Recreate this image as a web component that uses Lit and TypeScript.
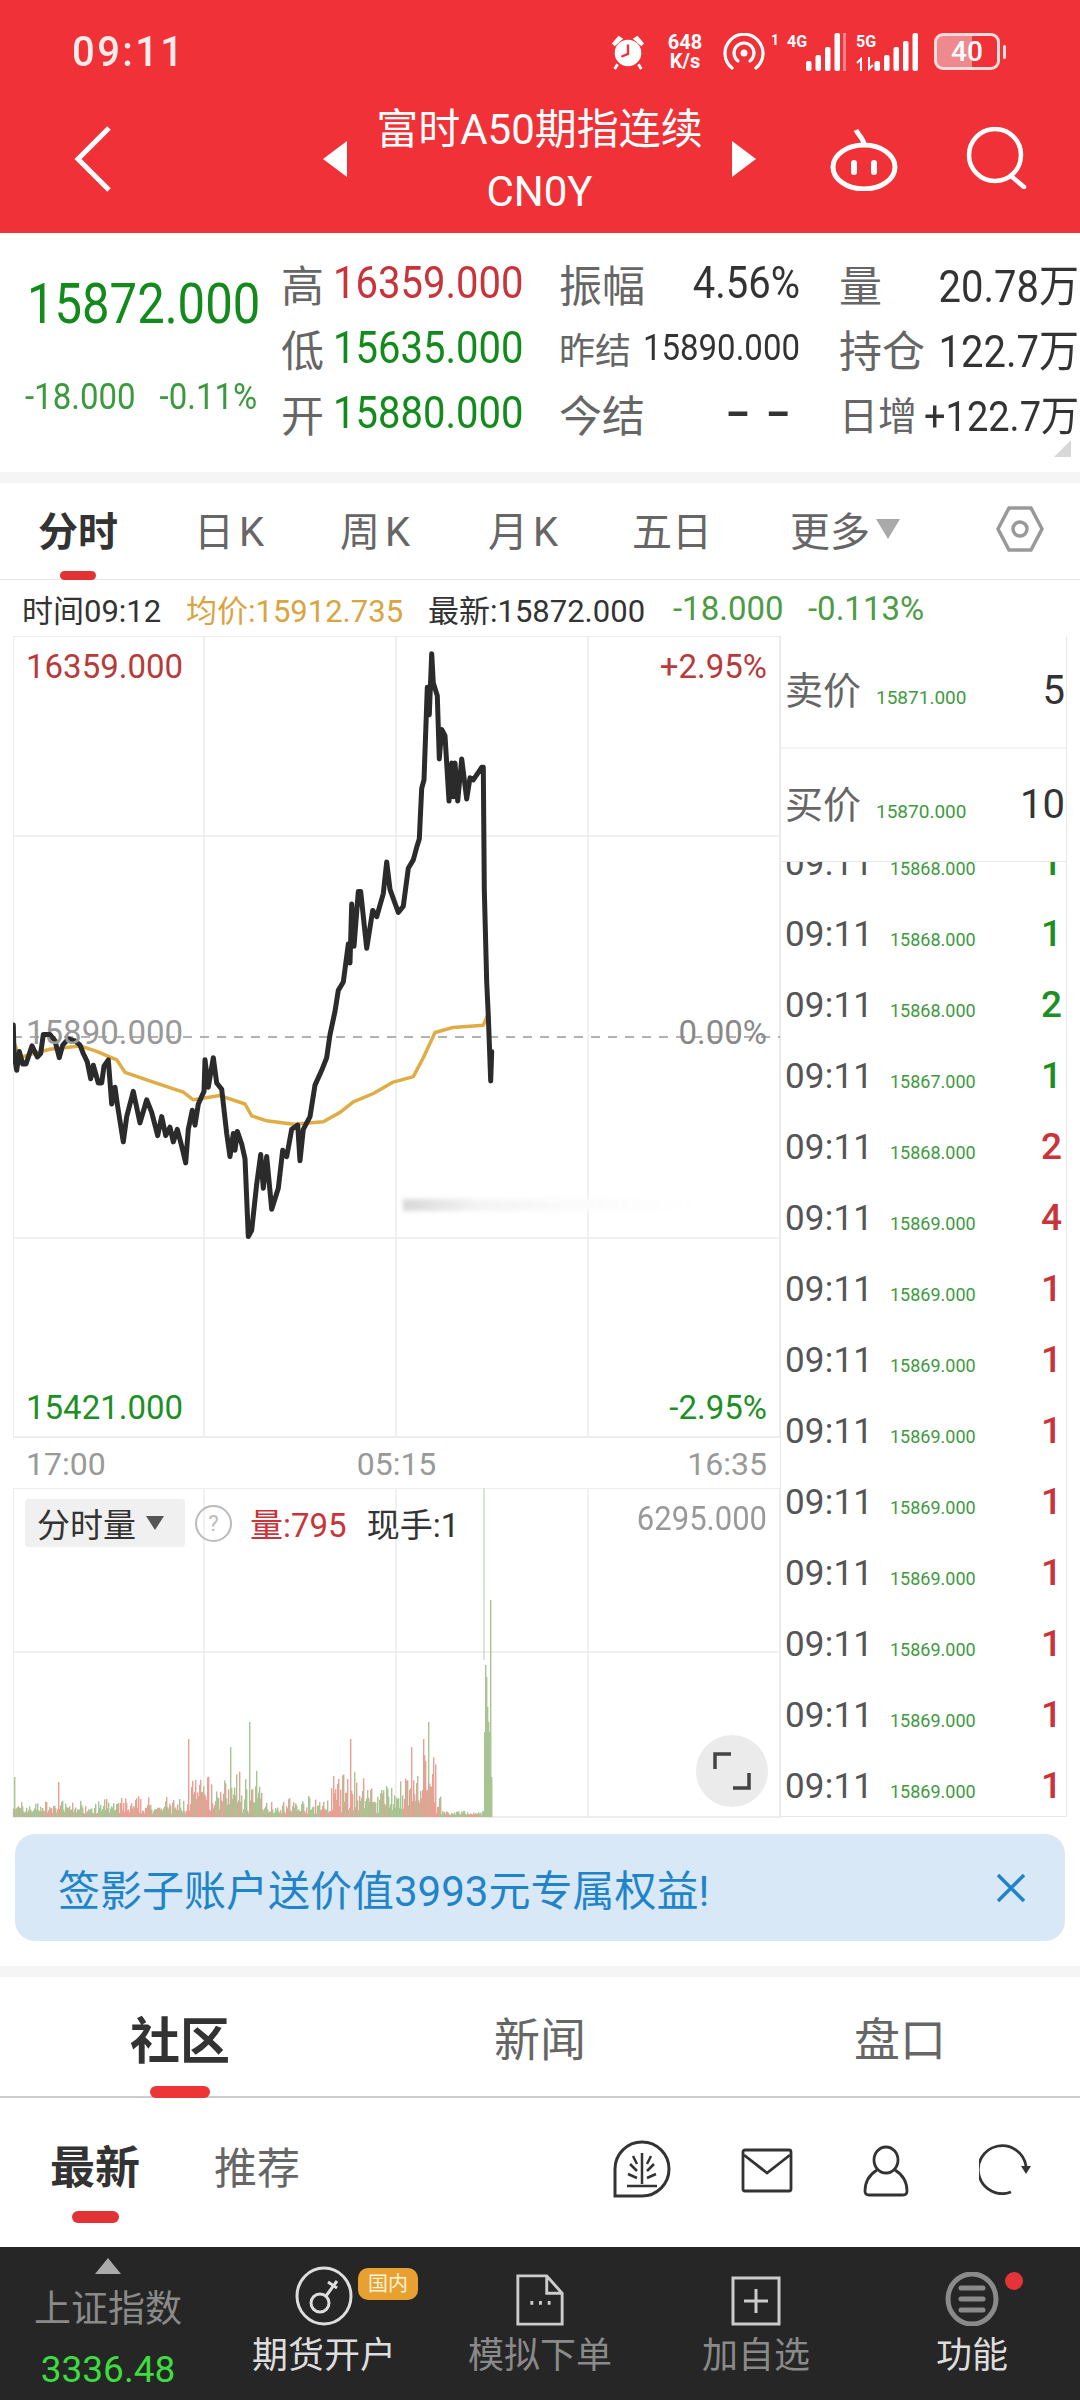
import { LitElement, html, css, svg } from "lit";
import { customElement } from "lit/decorators.js";

const LINE: number[][] = [[40,962],[42,1030],[50,1070],[58,1025],[68,1055],[78,1055],[96,1012],[112,1038],[122,1030],[130,985],[150,985],[165,1000],[178,1040],[188,1010],[205,995],[225,1000],[240,1010],[250,1030],[262,1050],[272,1090],[280,1058],[295,1100],[305,1100],[312,1060],[325,1045],[335,1150],[345,1110],[352,1150],[370,1240],[380,1180],[400,1120],[420,1195],[440,1140],[455,1170],[473,1225],[485,1180],[497,1225],[510,1205],[520,1240],[532,1210],[545,1250],[557,1290],[565,1210],[577,1165],[585,1200],[595,1150],[612,1120],[615,1045],[625,1110],[640,1040],[650,1100],[665,1115],[680,1220],[690,1275],[700,1220],[705,1260],[712,1215],[725,1245],[735,1280],[745,1465],[755,1450],[770,1340],[782,1270],[790,1350],[800,1275],[815,1400],[835,1350],[848,1260],[860,1275],[875,1210],[893,1200],[900,1285],[910,1210],[930,1180],[945,1105],[965,1070],[980,1040],[990,985],[1005,930],[1015,880],[1030,860],[1045,770],[1050,815],[1055,675],[1062,775],[1075,645],[1082,645],[1092,720],[1100,780],[1118,690],[1130,705],[1150,650],[1160,575],[1170,640],[1195,695],[1210,680],[1225,590],[1240,570],[1250,540],[1258,520],[1265,400],[1272,380],[1282,160],[1288,225],[1295,80],[1300,150],[1312,180],[1318,330],[1325,260],[1335,275],[1347,430],[1355,340],[1360,420],[1365,340],[1373,430],[1385,330],[1400,425],[1410,375],[1420,380],[1445,350],[1450,350],[1453,640],[1460,860],[1465,940],[1472,1095],[1475,1025]];
const AVG: number[][] = [[40,1000],[60,1040],[100,1030],[150,1020],[240,1012],[290,1025],[350,1045],[375,1075],[460,1098],[550,1122],[580,1140],[660,1130],[735,1150],[755,1178],[800,1190],[880,1198],[970,1192],[1020,1170],[1060,1145],[1120,1125],[1180,1098],[1240,1085],[1270,1040],[1305,980],[1360,968],[1450,963],[1465,935]];
const toPath = (pts: number[][]) =>
  pts.map(([x, y]) => `${(x / 3).toFixed(1)},${(620 + y / 2.376).toFixed(1)}`).join(" ");

const SPIKES: Record<number, number> = { 14: 40, 58: 35, 188: 78, 230: 70, 249: 95, 350: 78, 411: 70, 423: 78, 428: 95 };
function volBars() {
  let seed = 7;
  const rnd = () => ((seed = (seed * 16807) % 2147483647) / 2147483647);
  const out: { x: number; h: number; red: boolean }[] = [];
  for (let x = 13; x < 484; x++) {
    const inHot = (x > 185 && x < 262) || (x > 330 && x < 440);
    const amp = inHot ? 34 : x > 100 ? 14 : 10;
    const r = rnd();
    let h = 3 + r * r * r * amp + rnd() * (inHot ? 16 : 6);
    if (x > 415 && x < 436) h += 26 * rnd();
    if (x > 440) h = 2 + rnd() * 4;
    if (SPIKES[x]) h = SPIKES[x];
    const redZone = (x > 120 && x < 150) || (x > 185 && x < 215) || (x > 320 && x < 345) || (x > 405 && x < 440);
    out.push({ x, h, red: rnd() < (redZone ? 0.8 : 0.3) });
  }
  for (let x = 484; x < 492; x++) {
    const h = x === 485 ? 152 : x === 490 ? 217 : x === 486 ? 140 : x === 487 ? 110 : x === 488 ? 95 : x === 491 ? 40 : 85;
    out.push({ x, h, red: false });
  }
  return out;
}

const TICKS: [string, string, string][] = [
  ["15868.000", "1", "g"], ["15868.000", "1", "g"], ["15868.000", "2", "g"], ["15867.000", "1", "g"],
  ["15868.000", "2", "r"], ["15869.000", "4", "r"], ["15869.000", "1", "r"], ["15869.000", "1", "r"],
  ["15869.000", "1", "r"], ["15869.000", "1", "r"], ["15869.000", "1", "r"], ["15869.000", "1", "r"],
  ["15869.000", "1", "r"], ["15869.000", "1", "r"],
];

const signal = (hs: number[], w: number) => html`<svg width=${w} height="38" viewBox="0 0 ${w} 38">
  ${hs.map((h, i) => svg`<rect x=${w - (hs.length - i) * 9.5 + 4} y=${38 - h} width="5.5" height=${h} rx="2" fill="#fff"></rect>`)}
</svg>`;

@customElement("app-root")
export class AppRoot extends LitElement {
  static styles = css`
    :host { display: block; width: 1080px; height: 2400px; overflow: hidden; background: #fff; color: #333;
      font-family: Roboto, "Noto Sans CJK SC", sans-serif; }
    svg { display: block; }
    .head { background: #f03238; height: 233px; color: #fff; }
    .status { height: 85px; display: flex; align-items: center; justify-content: space-between; padding: 18px 74px 0 72px; box-sizing: border-box; }
    .time { font-size: 40px; letter-spacing: 2.4px; font-weight: 500; color: #fbeaea; display: inline-block; transform: scaleY(1.08); }
    .sys { display: flex; align-items: center; height: 40px; }
    .speed { font-size: 20px; line-height: 19px; font-weight: 700; text-align: center; width: 40px; margin: 0 18px; }
    .sim { font-size: 14px; line-height: 16px; font-weight: 700; align-self: flex-start; margin: 0 7px 0 6px; width: 9px; }
    .net { position: relative; height: 38px; }
    .net b { position: absolute; left: 0; top: 0; font-size: 16px; line-height: 17px; font-weight: 700; }
    .sep { width: 3px; height: 38px; background: #f68286; margin: 0 10px 0 3px; }
    .arrows { position: absolute; left: 0; bottom: 0; }
    .batt { width: 66px; height: 37px; border: 3px solid #fbdcdc; border-radius: 9px; box-sizing: border-box; margin-left: 16px; display: flex; align-items: center; justify-content: center; font-size: 28px; font-weight: 500; background: linear-gradient(90deg, #ee8a8d 58%, transparent 58%); }
    .cap { width: 3px; height: 14px; background: #fbdcdc; margin-left: 3px; border-radius: 2px; }
    .nav { height: 148px; display: grid; grid-template-columns: 1fr auto 1fr; align-items: center; padding-right: 1px; }
    .back { padding-left: 74px; }
    .mid { display: flex; align-items: center; gap: 29px; }
    .tt { text-align: center; font-size: 42px; line-height: 62px; padding-top: 8px; margin-top: -4px; }
    .acts { display: flex; justify-content: flex-end; gap: 66px; padding-right: 52px; }

    .stats { position: relative; height: 239px; box-sizing: border-box; padding-top: 17px; display: grid; grid-template-columns: 281px 278px 280px 241px; grid-template-rows: 65px 65px 65px; }
    .quote { grid-row: 1 / 4; padding-left: 27px; }
    .big { font-size: 49px; line-height: 56px; color: #138a1c; margin-top: 27px; transform: scaleY(1.14); transform-origin: 0 50%; }
    .sub { display: flex; gap: 24px; margin-left: -2px; margin-top: 46px; font-size: 33px; line-height: 36px; color: #3b9a3d; transform: scaleY(1.1); white-space: nowrap; }
    .cell { display: flex; align-items: center; justify-content: space-between; font-size: 40px; white-space: nowrap; }
    .c1 { justify-content: flex-start; gap: 9px; }
    .c2 { padding-right: 39px; }
    .c3 { padding-right: 1px; }
    .lbl { color: #666; font-size: 43px; }
    .lbl.sm { font-size: 36px; }
    .lbl.md { font-size: 39px; }
    .v { font-size: 40px; display: inline-block; transform: scaleY(1.12); }
    .v.s { font-size: 33px; }
    .v.n { font-size: 38px; }
    .v.dash { font-size: 40px; font-weight: 700; letter-spacing: 8px; margin-right: -6px; transform: scaleX(1.7); transform-origin: 100% 50%; }
    .red { color: #c8343a; }
    .grn { color: #138a1c; }
    .dark { color: #333; }
    .corner { position: absolute; right: 9px; bottom: 15px; width: 0; height: 0; border-left: 17px solid transparent; border-bottom: 17px solid #d8d8d8; }
    .band { height: 11px; background: #f5f5f5; }

    .tabs { height: 97px; box-sizing: border-box; border-bottom: 1px solid #e6e6e6; padding-left: 38px; display: grid; grid-template-columns: 156px 146px 148px 144px 158px 206px auto; position: relative; align-items: center; font-size: 40px; color: #666; padding-bottom: 4px; }
    .tabs .on { font-weight: 700; color: #333; }
    .tabs .k { letter-spacing: 5px; }
    .more { display: flex; align-items: center; gap: 6px; }
    .tri-d { width: 0; height: 0; border-left: 12px solid transparent; border-right: 12px solid transparent; border-top: 20px solid #aaa; }
    .tab-bar { position: absolute; left: 60px; bottom: -1px; width: 36px; height: 9px; border-radius: 5px; background: #e33235; }
    .info { height: 56px; display: grid; grid-template-columns: 164px 242px 245px 135px auto; padding-left: 22px; align-items: center; font-size: 31px; white-space: nowrap; }
    .gold { color: #d9a441; }
    .lg { color: #4d9c44; font-size: 33px; }

    .market { display: flex; padding-left: 13px; height: 1181px; }
    .left { width: 767px; position: relative; }
    .panel { position: relative; display: block; height: 802px; }
    .lab { position: absolute; font-size: 33px; line-height: 36px; white-space: nowrap; }
    .ax { height: 50px; display: flex; justify-content: space-between; align-items: center; padding: 2px 13px 0; font-size: 32px; color: #999; box-sizing: border-box; }
    .vol { position: relative; height: 329px; }
    .volhead { position: absolute; left: 12px; top: 11px; display: flex; align-items: center; font-size: 33px; color: #333; white-space: nowrap; }
    .chip { background: #f0f0f0; border-radius: 4px; height: 48px; width: 160px; box-sizing: border-box; padding-left: 12px; display: flex; align-items: center; gap: 10px; }
    .tri-s { width: 0; height: 0; border-left: 9px solid transparent; border-right: 9px solid transparent; border-top: 14px solid #555; }
    .q { width: 33px; height: 33px; border: 2px solid #bbb; border-radius: 50%; color: #bbb; font-size: 22px; line-height: 33px; text-align: center; margin: 0 18px 0 10px; }
    .vmax { position: absolute; right: 13px; top: 12px; font-size: 31px; color: #999; transform: scaleY(1.1); }
    .full { position: absolute; left: 683px; top: 247px; width: 72px; height: 72px; border-radius: 50%; background: #ebebeb; display: flex; align-items: center; justify-content: center; }

    .right { width: 287px; height: 1181px; border-left: 1px solid #e8e8e8; border-right: 1px solid #e8e8e8; border-bottom: 1px solid #e8e8e8; box-sizing: border-box; display: flex; flex-direction: column; }
    .q-row { height: 113px; box-sizing: border-box; display: flex; align-items: baseline; padding: 24px 1px 0 4px; border-bottom: 2px solid #f5f5f5; }
    .q-row + .q-row { border-bottom: 1px solid #e6e6e6; padding-top: 25px; }
    .q-row .n { font-size: 38px; color: #666; width: 91px; }
    .q-row .p { font-size: 19px; color: #3f9a3f; flex: 1; }
    .q-row .a { font-size: 40px; color: #333; }
    .tape { flex: 1; overflow: hidden; }
    .rows { margin-top: -34px; }
    .tk { height: 71px; display: flex; align-items: baseline; padding: 13px 4px 0 4px; box-sizing: border-box; }
    .tk .t { font-size: 35px; color: #555; width: 105px; letter-spacing: .2px; }
    .tk .p { font-size: 18px; color: #3f9a3f; flex: 1; }
    .tk .a { font-size: 37px; font-weight: 500; }
    .a.g { color: #1f8f25; }
    .a.r { color: #c8343a; }

    .promo-wrap { height: 149px; box-sizing: border-box; padding: 17px 15px 25px; }
    .promo { height: 107px; border-radius: 20px; background: #d9e8f7; display: flex; align-items: center; justify-content: space-between; padding: 0 38px 0 43px; color: #1f84c8; font-size: 42px; }

    .bigtabs { height: 121px; border-bottom: 2px solid #ccc; box-sizing: border-box; display: grid; grid-template-columns: repeat(3, 1fr); }
    .bt { display: flex; flex-direction: column; align-items: center; justify-content: flex-end; font-size: 46px; color: #666; }
    .bt.on { font-size: 50px; font-weight: 700; color: #333; }
    .bt .ln { width: 60px; height: 12px; border-radius: 6px; background: #ee3535; margin-top: 9px; margin-bottom: -2px; }
    .bt span { line-height: 66px; margin-bottom: 23px; }
    .bt.on span { margin-bottom: 2px; }
    .sub2 { height: 149px; display: flex; padding: 0 49px 0 50px; justify-content: space-between; box-sizing: border-box; }
    .st { display: flex; gap: 74px; padding-top: 39px; font-size: 43px; color: #666; }
    .st .on { font-size: 45px; font-weight: 700; color: #333; display: flex; flex-direction: column; align-items: center; }
    .st .on i { display: block; width: 47px; height: 12px; border-radius: 6px; background: #e33235; margin-top: 10px; }
    .st .on span, .st > span { line-height: 64px; }
    .ic { display: flex; align-items: flex-start; gap: 70px; padding: 42px 0 0 0; }

    .bottom { height: 153px; background: #262626; display: grid; grid-template-columns: repeat(5, 216px); }
    .bi { position: relative; display: flex; flex-direction: column; align-items: center; font-size: 36px; color: #8a8a8a; }
    .bi.w { color: #ddd; }
    .bi .iw { height: 86px; display: flex; align-items: flex-end; justify-content: center; padding-bottom: 7px; box-sizing: border-box; }
    .bi .la { line-height: 44px; margin-top: 1px; }
    .idx .tr { width: 0; height: 0; border-left: 13px solid transparent; border-right: 13px solid transparent; border-bottom: 16px solid #aaa; margin-top: 11px; }
    .idx .nm { font-size: 37px; line-height: 46px; margin-top: 13px; }
    .idx .pr { font-size: 37px; color: #3ddc3f; line-height: 44px; margin-top: 15px; }
    .tag { position: absolute; left: 142px; top: 21px; width: 60px; height: 32px; border-radius: 10px; background: #e8a030; color: #fff3d8; font-size: 20px; line-height: 32px; text-align: center; }
    .dot { position: absolute; left: 141px; top: 25px; width: 18px; height: 18px; border-radius: 50%; background: #e5333a; }
  `;

  private grid(y0: number, h: number, hs: number[]) {
    return svg`
      <rect x="13" y=${y0} width="767" height=${h} fill="none" stroke="#e8e8e8" stroke-width="1.5"></rect>
      ${[204, 396, 588].map((x) => svg`<line x1=${x} x2=${x} y1=${y0} y2=${y0 + h} stroke="#ececec" stroke-width="1.5"></line>`)}
      ${hs.map((y) => svg`<line x1="13" x2="780" y1=${y} y2=${y} stroke="#ececec" stroke-width="1.5"></line>`)}
    `;
  }

  render() {
    return html`
      <div class="head">
        <div class="status">
          <span class="time">09:11</span>
          <div class="sys">
            <svg width="38" height="40" viewBox="0 0 40 40"><circle cx="20" cy="21" r="14" fill="#fff"/><path d="M3 11 L10 3 L15 6 L6 14Z M37 11 L30 3 L25 6 L34 14Z" fill="#fff"/><path d="M20 12 V22 L13 25" fill="none" stroke="#f03238" stroke-width="2.5"/><path d="M9 33 L6 38 M31 33 L34 38" stroke="#fff" stroke-width="3"/></svg>
            <div class="speed">648<br />K/s</div>
            <svg width="42" height="38" viewBox="0 0 42 38" fill="none" stroke="#fff" stroke-width="3.2" stroke-linecap="round"><path d="M9 35 A19 19 0 1 1 33 35"/><path d="M15 28 A10 10 0 1 1 27 28"/><circle cx="21" cy="20" r="3.5" fill="#fff" stroke="none"/></svg>
            <span class="sim">1</span>
            <div class="net"><b>4G</b>${signal([10, 16, 24, 38], 53)}</div>
            <div class="sep"></div>
            <div class="net"><b>5G</b>
              <svg class="arrows" width="18" height="14" viewBox="0 0 18 14" fill="none" stroke="#fff" stroke-width="2"><path d="M5 14 V2 L1 6 M13 0 V12 L17 8"/></svg>
              ${signal([10, 16, 24, 30, 38], 62)}</div>
            <div class="batt">40</div><div class="cap"></div>
          </div>
        </div>
        <div class="nav">
          <div class="back"><svg width="40" height="66" viewBox="0 0 40 66"><path d="M35 2 L4 33 L35 64" fill="none" stroke="#fff" stroke-width="5"/></svg></div>
          <div class="mid">
            <svg width="24" height="36" viewBox="0 0 24 36"><path d="M24 0 V36 L0 18Z" fill="#fff"/></svg>
            <div class="tt">富时A50期指连续<br />CN0Y</div>
            <svg width="24" height="36" viewBox="0 0 24 36"><path d="M0 0 V36 L24 18Z" fill="#fff"/></svg>
          </div>
          <div class="acts">
            <svg width="70" height="64" viewBox="0 0 70 64" fill="none" stroke="#fff" stroke-width="5"><path d="M35 18 C35 12 30 9 27 3" /><ellipse cx="35" cy="40" rx="31" ry="22"/><path d="M25 36 V45 M45 36 V45" stroke-width="6" stroke-linecap="round"/></svg>
            <svg width="62" height="62" viewBox="0 0 62 62" fill="none" stroke="#fff" stroke-width="4.5"><circle cx="30" cy="28" r="26"/><path d="M46 49 L59 60" stroke-linecap="round"/></svg>
          </div>
        </div>
      </div>

      <div class="stats">
        <div class="quote">
          <div class="big">15872.000</div>
          <div class="sub"><span>-18.000</span><span>-0.11%</span></div>
        </div>
        <div class="cell c1"><span class="lbl">高</span><span class="v red">16359.000</span></div>
        <div class="cell c2"><span class="lbl">振幅</span><span class="v dark">4.56%</span></div>
        <div class="cell c3"><span class="lbl">量</span><span class="v dark">20.78万</span></div>
        <div class="cell c1"><span class="lbl">低</span><span class="v grn">15635.000</span></div>
        <div class="cell c2"><span class="lbl sm">昨结</span><span class="v s dark">15890.000</span></div>
        <div class="cell c3"><span class="lbl">持仓</span><span class="v dark">122.7万</span></div>
        <div class="cell c1"><span class="lbl">开</span><span class="v grn">15880.000</span></div>
        <div class="cell c2"><span class="lbl">今结</span><span class="v dash dark">--</span></div>
        <div class="cell c3"><span class="lbl md">日增</span><span class="v n dark">+122.7万</span></div>
        <div class="corner"></div>
      </div>
      <div class="band"></div>

      <div class="tabs">
        <span class="on">分时</span><span class="k">日K</span><span class="k">周K</span><span class="k">月K</span><span>五日</span>
        <span class="more">更多<i class="tri-d"></i></span>
        <svg width="48" height="48" viewBox="0 0 48 48" fill="none" stroke="#999" stroke-width="3.5"><path d="M13 3 H35 L46 24 L35 45 H13 L2 24Z"/><circle cx="24" cy="24" r="7"/></svg>
        <div class="tab-bar"></div>
      </div>
      <div class="info">
        <span>时间09:12</span><span class="gold">均价:15912.735</span><span>最新:15872.000</span><span class="lg">-18.000</span><span class="lg">-0.113%</span>
      </div>

      <div class="market">
        <div class="left">
          <div class="panel">
            <svg width="768" height="802" viewBox="13 636 768 802">
              ${this.grid(636, 801, [836, 1238])}
              <line x1="13" x2="780" y1="1037" y2="1037" stroke="#999" stroke-width="1.6" stroke-dasharray="9 8"></line>
              <polyline points=${toPath(AVG)} fill="none" stroke="#e0ac45" stroke-width="3.5" stroke-linejoin="round"></polyline>
              <polyline points=${toPath(LINE)} fill="none" stroke="#2b2b2b" stroke-width="5" stroke-linejoin="round" stroke-linecap="round"></polyline>
            </svg>
            <span class="lab" style="left:13px;top:13px;color:#b83a3a">16359.000</span>
            <span class="lab" style="right:13px;top:13px;color:#b83a3a">+2.95%</span>
            <span class="lab" style="left:13px;top:379px;color:#999">15890.000</span>
            <span class="lab" style="right:13px;top:379px;color:#888">0.00%</span>
            <span class="lab" style="left:13px;top:754px;color:#1e8f25">15421.000</span>
            <span class="lab" style="right:13px;top:754px;color:#1e8f25">-2.95%</span>
            <div style="position:absolute;left:390px;top:563px;width:300px;height:12px;background:linear-gradient(90deg,#d8d8d8,#f4f4f4 25%,#fbfbfb 60%,transparent);filter:blur(2px)"></div>
          </div>
          <div class="ax"><span>17:00</span><span>05:15</span><span>16:35</span></div>
          <div class="vol">
            <svg width="768" height="330" viewBox="13 1488 768 330">
              ${this.grid(1488, 329, [1652])}
              <line x1="484" x2="484" y1="1488" y2="1660" stroke="#cfdcc6" stroke-width="1.5"></line>
              ${volBars().map((b) => svg`<rect x=${b.x} y=${1817 - b.h} width="1.4" height=${b.h} fill=${b.red ? "#e8a094" : "#a8c492"}></rect>`)}
            </svg>
            <div class="volhead">
              <div class="chip">分时量<i class="tri-s"></i></div>
              <div class="q">?</div>
              <span class="red" style="margin-right:20px">量:795</span><span>现手:1</span>
            </div>
            <div class="vmax">6295.000</div>
            <div class="full">
              <svg width="38" height="38" viewBox="0 0 38 38" fill="none" stroke="#444" stroke-width="3.5"><path d="M2 17 V2 H18 M36 21 V36 H20"/></svg>
            </div>
          </div>
        </div>
        <div class="right">
          <div class="q-row"><span class="n">卖价</span><span class="p">15871.000</span><span class="a">5</span></div>
          <div class="q-row"><span class="n">买价</span><span class="p">15870.000</span><span class="a">10</span></div>
          <div class="tape"><div class="rows">
            ${TICKS.map(([p, a, c]) => html`<div class="tk"><span class="t">09:11</span><span class="p">${p}</span><span class="a ${c}">${a}</span></div>`)}
          </div></div>
        </div>
      </div>

      <div class="promo-wrap">
        <div class="promo"><span>签影子账户送价值3993元专属权益!</span>
          <svg width="32" height="32" viewBox="0 0 32 32"><path d="M3 3 L29 29 M29 3 L3 29" stroke="#1f84c8" stroke-width="3.5"/></svg>
        </div>
      </div>
      <div class="band"></div>

      <div class="bigtabs">
        <div class="bt on"><span>社区</span><i class="ln"></i></div>
        <div class="bt"><span>新闻</span></div>
        <div class="bt"><span>盘口</span></div>
      </div>
      <div class="sub2">
        <div class="st"><div class="on"><span>最新</span><i></i></div><span>推荐</span></div>
        <div class="ic">
          <svg width="58" height="58" viewBox="0 0 58 58" fill="none" stroke="#333" stroke-width="3"><path d="M2 56 V29 A27 27 0 1 1 29 56Z"/><path d="M29 13 V44 M20 16 L24 24 M38 16 L34 24 M17 24 L24 31 M41 24 L34 31 M15 34 L24 38 M43 34 L34 38 M14 46 H44" stroke-width="2.5"/></svg>
          <svg width="52" height="46" viewBox="0 0 52 46" fill="none" stroke="#333" stroke-width="2.8" style="margin-top:7px"><rect x="2" y="3" width="48" height="41" rx="2"/><path d="M3 8 L26 26 L49 8"/></svg>
          <svg width="46" height="52" viewBox="0 0 46 52" fill="none" stroke="#333" stroke-width="2.8" style="margin-top:5px"><ellipse cx="23" cy="15" rx="12" ry="13"/><path d="M14 25 C6 30 2 38 2 46 C2 49 4 50 6 50 H40 C42 50 44 49 44 46 C44 38 40 30 32 25"/></svg>
          <svg width="52" height="52" viewBox="0 0 52 52" fill="none" stroke="#333" stroke-width="2.8" style="margin-top:3px"><path d="M32 49 A24 24 0 1 1 47 23"/><path d="M42 23 L52 23 L47 31Z" fill="#333" stroke="none"/></svg>
        </div>
      </div>

      <div class="bottom">
        <div class="bi idx"><i class="tr"></i><div class="nm">上证指数</div><div class="pr">3336.48</div></div>
        <div class="bi w">
          <div class="iw"><svg width="58" height="60" viewBox="0 0 58 60" fill="none" stroke="#ddd" stroke-width="3"><ellipse cx="29" cy="30" rx="27" ry="28"/><circle cx="25" cy="37" r="9"/><path d="M31 30 L42 15 M33 16 L42 22"/></svg></div>
          <div class="la">期货开户</div>
          <div class="tag">国内</div>
        </div>
        <div class="bi">
          <div class="iw"><svg width="50" height="52" viewBox="0 0 50 54" fill="none" stroke="#ccc" stroke-width="3"><path d="M2 2 H32 L48 20 V52 H2Z M32 2 V20 H48"/><path d="M15 30 h3 M24 30 h3 M33 30 h3" stroke-width="4"/></svg></div>
          <div class="la">模拟下单</div>
        </div>
        <div class="bi">
          <div class="iw"><svg width="50" height="50" viewBox="0 0 50 50" fill="none" stroke="#ccc" stroke-width="3"><rect x="2" y="2" width="46" height="46"/><path d="M25 13 V37 M13 25 H37"/></svg></div>
          <div class="la">加自选</div>
        </div>
        <div class="bi w">
          <div class="iw"><svg width="54" height="54" viewBox="0 0 54 54" fill="none" stroke="#8a8a8a"><ellipse cx="27" cy="27" rx="24" ry="25" stroke-width="5"/><path d="M16 16 H38 M16 27 H38 M16 38 H38" stroke-width="5" stroke-linecap="round"/></svg></div>
          <div class="la">功能</div>
          <div class="dot"></div>
        </div>
      </div>
    `;
  }
}
